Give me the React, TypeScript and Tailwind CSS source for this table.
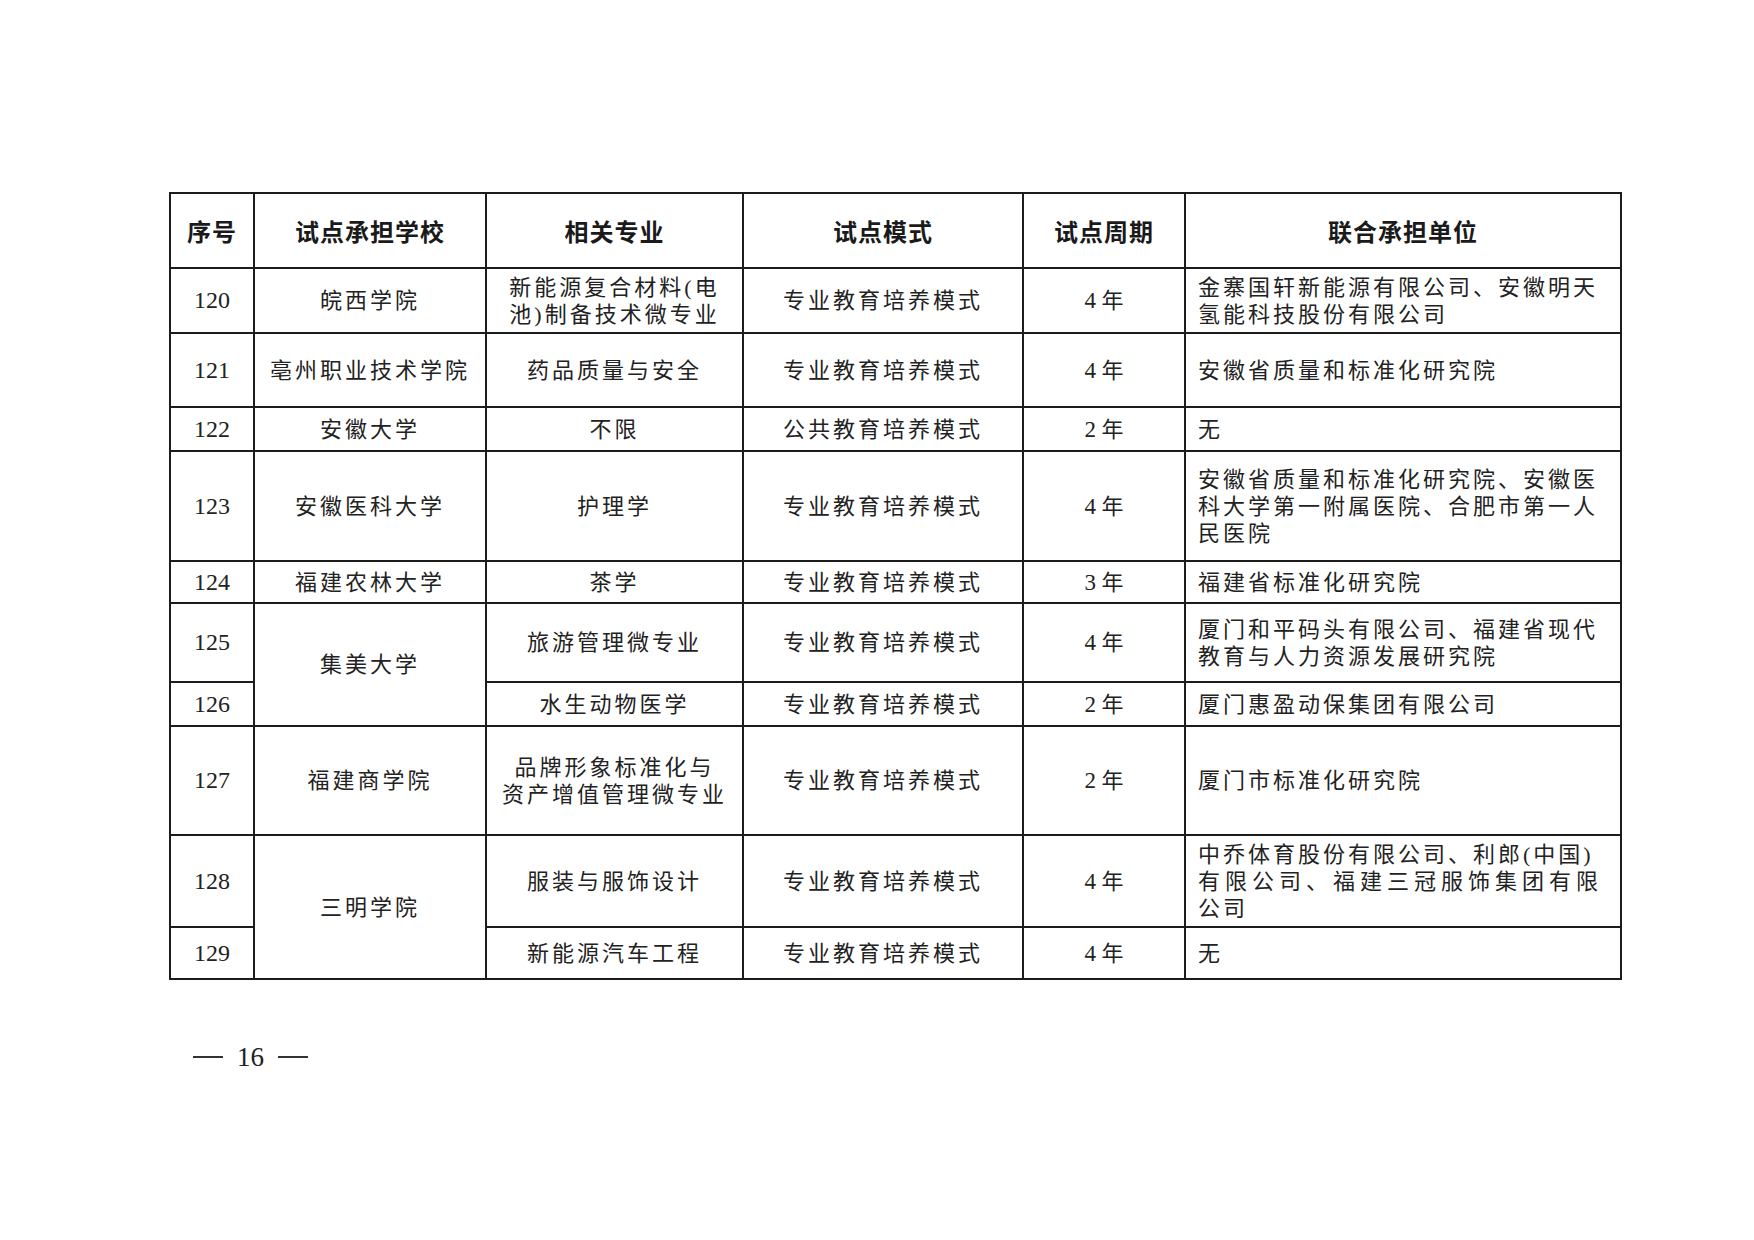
import React from 'react';

type Row = {
  no: string;
  school?: string;
  schoolSpan?: number;
  major: string[];
  mode: string;
  period: string;
  partner: string[];
  h: string;
};

const rows: Row[] = [
  { no: '120', school: '皖西学院', major: ['新能源复合材料(电', '池)制备技术微专业'], mode: '专业教育培养模式', period: '4', partner: ['金寨国轩新能源有限公司、安徽明天', '氢能科技股份有限公司'], h: 'h-[65px]' },
  { no: '121', school: '亳州职业技术学院', major: ['药品质量与安全'], mode: '专业教育培养模式', period: '4', partner: ['安徽省质量和标准化研究院'], h: 'h-[74px]' },
  { no: '122', school: '安徽大学', major: ['不限'], mode: '公共教育培养模式', period: '2', partner: ['无'], h: 'h-[44px]' },
  { no: '123', school: '安徽医科大学', major: ['护理学'], mode: '专业教育培养模式', period: '4', partner: ['安徽省质量和标准化研究院、安徽医', '科大学第一附属医院、合肥市第一人', '民医院'], h: 'h-[110px]' },
  { no: '124', school: '福建农林大学', major: ['茶学'], mode: '专业教育培养模式', period: '3', partner: ['福建省标准化研究院'], h: 'h-[42px]' },
  { no: '125', school: '集美大学', schoolSpan: 2, major: ['旅游管理微专业'], mode: '专业教育培养模式', period: '4', partner: ['厦门和平码头有限公司、福建省现代', '教育与人力资源发展研究院'], h: 'h-[79px]' },
  { no: '126', major: ['水生动物医学'], mode: '专业教育培养模式', period: '2', partner: ['厦门惠盈动保集团有限公司'], h: 'h-[44px]' },
  { no: '127', school: '福建商学院', major: ['品牌形象标准化与', '资产增值管理微专业'], mode: '专业教育培养模式', period: '2', partner: ['厦门市标准化研究院'], h: 'h-[109px]' },
  { no: '128', school: '三明学院', schoolSpan: 2, major: ['服装与服饰设计'], mode: '专业教育培养模式', period: '4', partner: ['中乔体育股份有限公司、利郎(中国)', '有限公司、福建三冠服饰集团有限', '公司'], h: 'h-[92px]' },
  { no: '129', major: ['新能源汽车工程'], mode: '专业教育培养模式', period: '4', partner: ['无'], h: 'h-[52px]' },
];

// lines that are stretched to the cell's full width in the scan
const wideLines = ['有限公司、福建三冠服饰集团有限'];

const cell = 'border-2 border-[#1c1c1c] align-middle';
const body = "font-['Liberation_Serif','Noto_Sans_CJK_SC',serif] text-[22px] leading-[27px] tracking-[3px] text-[#222]";
const head = "font-['Noto_Sans_CJK_SC',sans-serif] font-bold text-[24px] tracking-[1px] text-[#1a1a1a] text-center";

const Lines = ({ lines }: { lines: string[] }) => (
  <>
    {lines.map((l, i) => (
      <div key={i} className={`whitespace-nowrap ${wideLines.includes(l) ? 'tracking-[5px]' : ''}`}>
        {l}
      </div>
    ))}
  </>
);

export default function App() {
  return (
    <div className="w-[1754px] h-[1240px] bg-white overflow-hidden">
      <div className="pt-[192px] pl-[169px]">
        <table className="border-collapse table-fixed w-[1451px]">
          <colgroup>
            <col className="w-[84px]" />
            <col className="w-[232px]" />
            <col className="w-[257px]" />
            <col className="w-[280px]" />
            <col className="w-[162px]" />
            <col className="w-[436px]" />
          </colgroup>
          <thead>
            <tr className="h-[75px]">
              <th className={`${cell} ${head}`}>序号</th>
              <th className={`${cell} ${head}`}>试点承担学校</th>
              <th className={`${cell} ${head}`}>相关专业</th>
              <th className={`${cell} ${head}`}>试点模式</th>
              <th className={`${cell} ${head}`}>试点周期</th>
              <th className={`${cell} ${head}`}>联合承担单位</th>
            </tr>
          </thead>
          <tbody>
            {rows.map(r => (
              <tr key={r.no} className={r.h}>
                <td className={`${cell} ${body} text-center tracking-normal text-[24px]`}>{r.no}</td>
                {r.school && (
                  <td rowSpan={r.schoolSpan ?? 1} className={`${cell} ${body} text-center`}>
                    {r.school}
                  </td>
                )}
                <td className={`${cell} ${body} text-center`}>
                  <Lines lines={r.major} />
                </td>
                <td className={`${cell} ${body} text-center`}>{r.mode}</td>
                <td className={`${cell} ${body} text-center tracking-normal`}>
                  <span className="text-[23px]">{r.period}</span> 年
                </td>
                <td className={`${cell} ${body} text-left pl-[12px]`}>
                  <Lines lines={r.partner} />
                </td>
              </tr>
            ))}
          </tbody>
        </table>
      </div>
      <div className="mt-[62px] pl-[193px] flex items-center gap-[14px] font-['Liberation_Serif',serif] text-[27px] leading-[30px] text-[#222]">
        <span className="w-[30px] h-[2px] bg-[#333]" />
        <span>16</span>
        <span className="w-[30px] h-[2px] bg-[#333]" />
      </div>
    </div>
  );
}
